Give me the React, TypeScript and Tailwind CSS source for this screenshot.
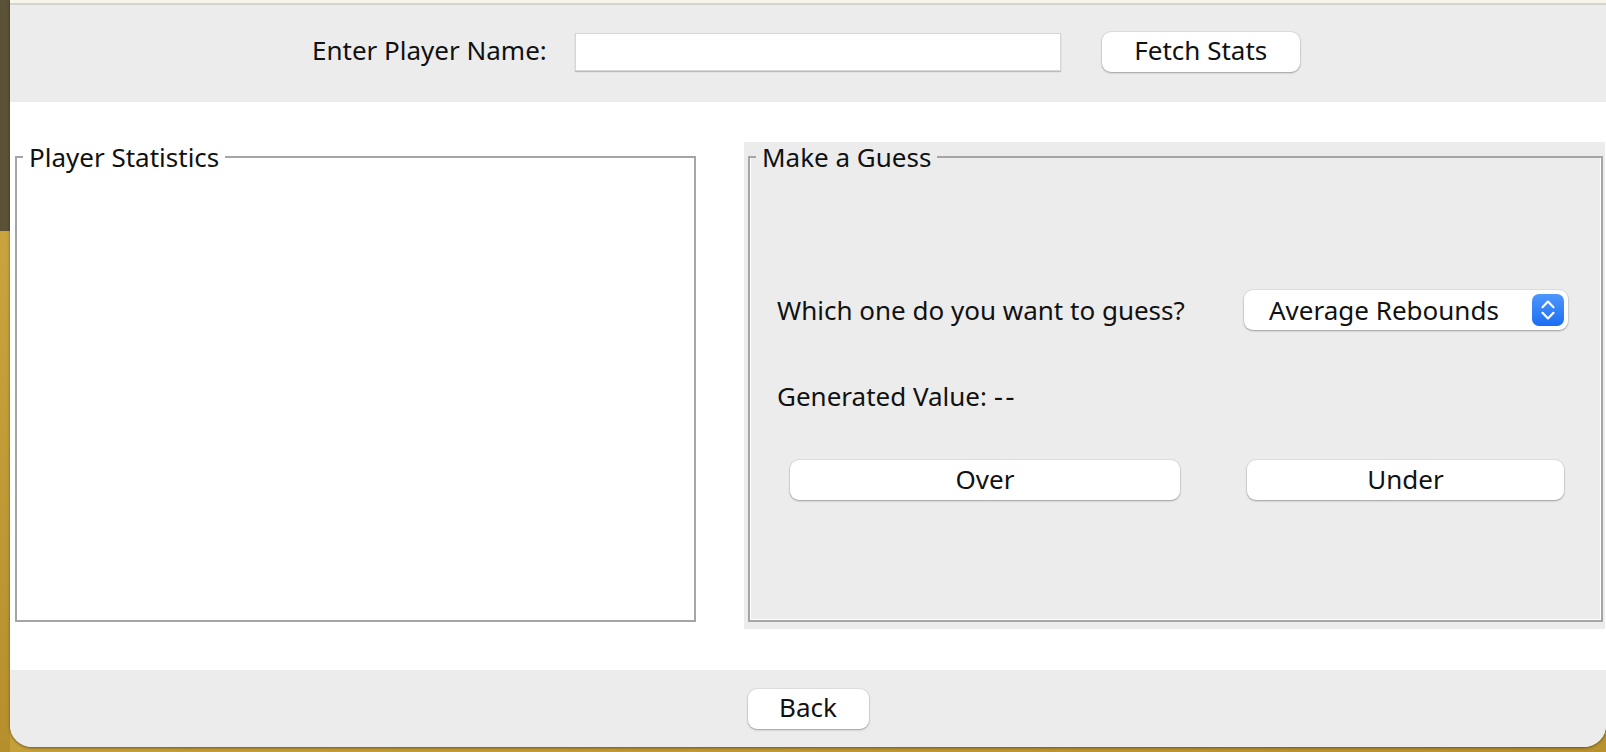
import React from 'react';

function MacButton({ label, className }: { label: string; className: string }) {
  return (
    <button
      className={`flex items-center justify-center rounded-[9px] bg-white pb-[3px] text-[26px] leading-none text-[#111] shadow-[0_1px_2px_rgba(0,0,0,0.3),0_0_0_1px_rgba(0,0,0,0.05)] ${className}`}
    >
      {label}
    </button>
  );
}

function TitledBox({
  title,
  className,
  children,
}: {
  title: string;
  className: string;
  children?: React.ReactNode;
}) {
  return (
    <fieldset className={`border-2 border-[#a5a5a5] ${className}`}>
      <legend className="ml-[6px] px-[6px] text-[26px] leading-[30px] text-[#111]">{title}</legend>
      {children}
    </fieldset>
  );
}

export default function App() {
  return (
    <div className="flex h-[752px] w-[1606px] overflow-hidden bg-gradient-to-br from-[#d2ad45] to-[#b8922e] font-['Noto_Sans',sans-serif]">
      {/* desktop strip on the left */}
      <div className="flex w-[10px] flex-col">
        <div className="h-[231px] bg-[#5a5137]" />
        <div className="flex-1 bg-gradient-to-b from-[#c9a43e] to-[#b48f2c]" />
      </div>

      {/* window */}
      <div className="flex h-[747px] flex-1 flex-col overflow-hidden rounded-b-[22px] bg-white shadow-[0_1px_3px_rgba(0,0,0,0.45)]">
        <div className="h-[3px] bg-[#f7f4ea]" />
        <div className="h-[2px] bg-[#d3d3d3]" />

        {/* header */}
        <div className="flex h-[97px] items-center bg-[#ececec] pb-[4px] pl-[302px]">
          <span className="mb-[4px] text-[26px] leading-none text-[#111]">Enter Player Name:</span>
          <input
            type="text"
            className="ml-[28px] h-[38px] w-[486px] border border-[#d6d6d6] bg-white shadow-[0_1px_1px_rgba(0,0,0,0.2)] outline-none"
          />
          <MacButton label="Fetch Stats" className="ml-[41px] h-[40px] w-[198px]" />
        </div>

        {/* panels */}
        <div className="flex h-[568px] items-start pt-[40px]">
          <TitledBox title="Player Statistics" className="ml-[5px] h-[480px] w-[681px] bg-white" />

          <div className="ml-[48px] h-[487px] w-[861px] bg-[#ececec] pl-[4px]">
            <TitledBox
              title="Make a Guess"
              className="h-[480px] w-[855px] shadow-[inset_1px_-1px_0_#fff,inset_-1px_0_0_#fff]"
            >
              <div className="mt-[118px] flex h-[40px] items-center justify-between pl-[27px] pr-[33px]">
                <span className="text-[26px] leading-none text-[#111]">Which one do you want to guess?</span>
                <div className="flex h-[40px] w-[324px] items-center rounded-[9px] bg-white pl-[25px] pr-[4px] shadow-[0_1px_2px_rgba(0,0,0,0.3),0_0_0_1px_rgba(0,0,0,0.05)]">
                  <span className="flex-1 text-[26px] leading-none text-[#111]">Average Rebounds</span>
                  <div className="flex h-[32px] w-[32px] items-center justify-center rounded-[7px] bg-gradient-to-b from-[#4d96fb] to-[#1b6ef3]">
                    <svg width="32" height="32" viewBox="0 0 32 32" fill="none">
                      <path
                        d="M10.5 13.2L16 7.6L21.5 13.2M10.5 18.8L16 24.4L21.5 18.8"
                        stroke="white"
                        strokeWidth="2.2"
                        strokeLinecap="round"
                        strokeLinejoin="round"
                      />
                    </svg>
                  </div>
                </div>
              </div>

              <div className="mt-[46px] flex h-[40px] items-center pl-[27px]">
                <span className="text-[26px] leading-none text-[#111]">
                  Generated Value: <span className="font-['DejaVu_Sans',sans-serif] tracking-[2px]">--</span>
                </span>
              </div>

              <div className="mt-[44px] flex pl-[40px]">
                <MacButton label="Over" className="h-[40px] w-[390px]" />
                <MacButton label="Under" className="ml-[67px] h-[40px] w-[317px]" />
              </div>
            </TitledBox>
          </div>
        </div>

        {/* footer */}
        <div className="flex h-[77px] items-center justify-center bg-[#ececec]">
          <MacButton label="Back" className="h-[40px] w-[121px]" />
        </div>
      </div>
    </div>
  );
}
